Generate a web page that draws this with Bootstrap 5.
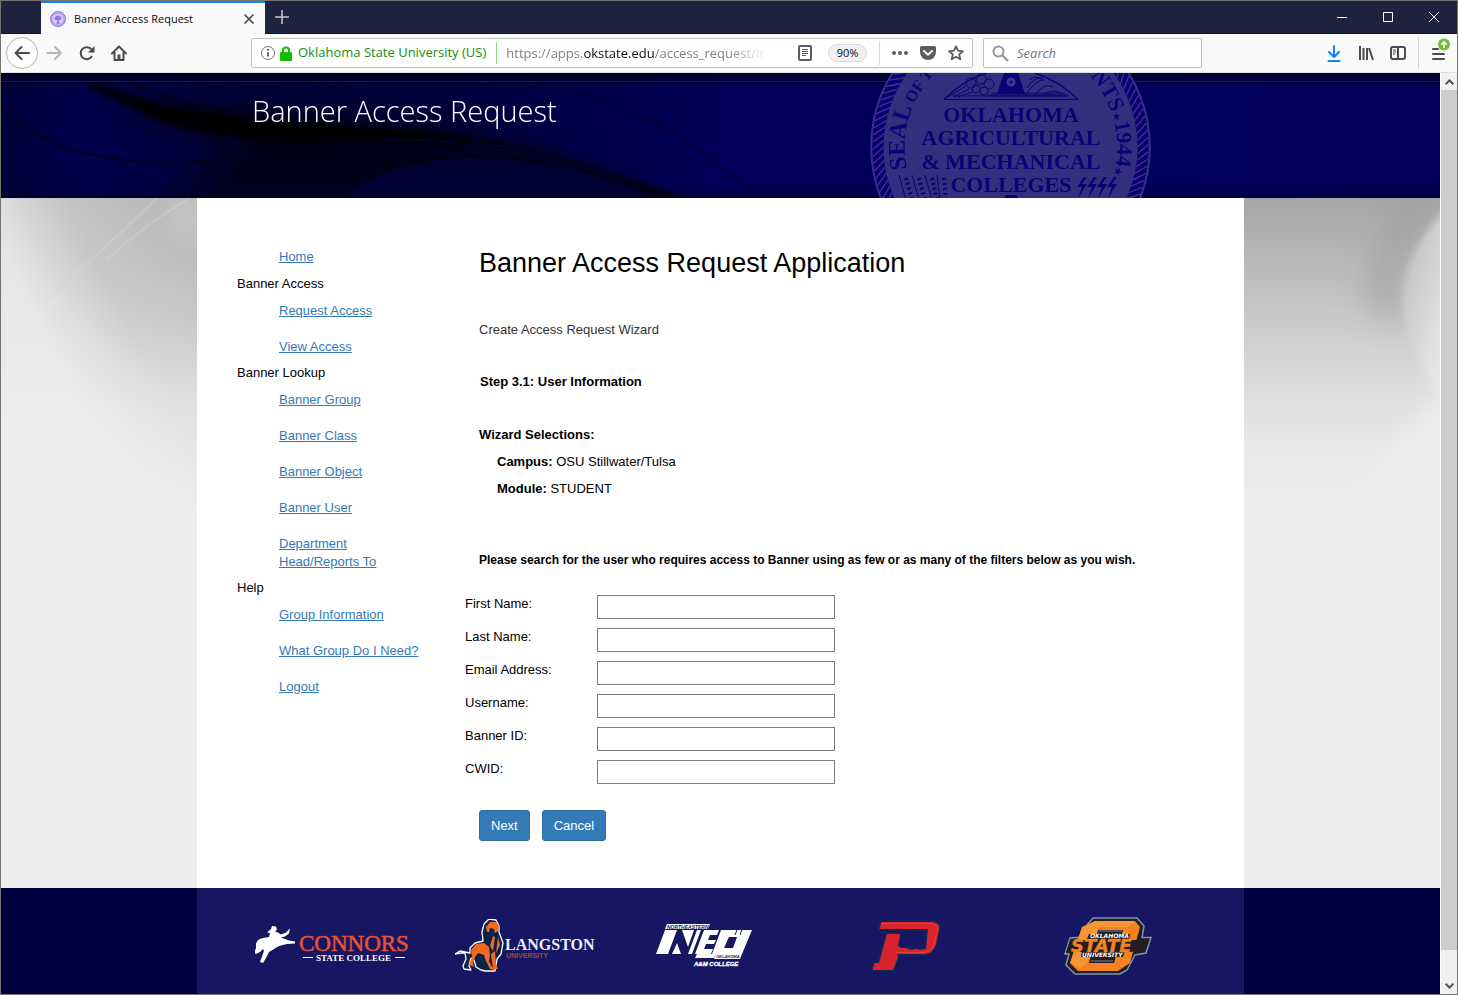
<!DOCTYPE html>
<html lang="en">
<head>
<meta charset="utf-8">
<meta name="viewport" content="width=device-width, initial-scale=1">
<title>Banner Access Request</title>
<link rel="stylesheet" href="https://cdn.jsdelivr.net/npm/bootstrap@5.3.0/dist/css/bootstrap.min.css">
<style>
  :root { --ui: "Open Sans", "Noto Sans", sans-serif; }
  body { font: 13px/18px "Liberation Sans", Arial, sans-serif; color: #000; background: #eee; border: 1px solid #77746f; }
  svg { display: block; }

  /* browser window */
  .tabstrip { background: #202340; height: 33px; border-bottom: 1px solid #1a0c2e; }
  .tab-active { margin-left: 40px; width: 224px; background: #f9f9fa; border-top: 2px solid #0a84ff; color: #0c0c0d; font: 11px/16px var(--ui); margin-bottom: -1px; padding: 0 10px 0 9px; }
  .plain { background: none; border: 0; padding: 0; color: inherit; flex: none; }
  .window-buttons { gap: 36px; margin-right: 18px; }
  .toolbar { background: #f9f9fa; height: 39px; border-bottom: 1px solid #e0e0e1; font: 13px/20px var(--ui); padding: 0 6px 0 5px; color: #4a4a4f; }
  .back { width: 32px; height: 32px; border: 1px solid #b5b5b7; border-radius: 50%; background: #fdfdfd; }
  .field { height: 30px; border: 1px solid #bfbfc0; border-radius: 2px; background: #fff; }
  .address { margin-left: 124px; }
  .identity { color: #12900d; border-right: 1px solid #8ad987; height: 22px; padding-right: 10px; margin-left: 6px; }
  .url { color: #808085; width: 260px; margin-left: 9px; -webkit-mask-image: linear-gradient(90deg, #000 85%, transparent); mask-image: linear-gradient(90deg, #000 85%, transparent); }
  .url b { color: #0c0c0d; font-weight: 400; }
  .zoom { font-size: 11px; line-height: 16px; color: #0c0c0d; background: #f0f0f1; border: 1px solid #dcdcde; border-radius: 9px; width: 39px; height: 18px; }
  .rule { width: 1px; background: #d7d7db; height: 24px; }
  .search { width: 219px; margin: 0 124px 0 10px; padding: 0 8px; }
  .search input { border: 0; outline: 0; min-width: 0; font-style: italic; }
  .search input::placeholder { color: #75757a; opacity: 1; }
  .tools { margin-right: 12px; }
  .scroll-track { width: 17px; background: #f0f0f0; border-left: 1px solid #fff; }
  .scroll-track button { height: 17px; }
  .scroll-thumb { background: #cdcdcd; margin-bottom: 27px; }

  /* page */
  .page-col { max-width: 1047px; width: 100%; margin: 0 auto; }
  .masthead { height: 125px; background: #000050; }
  .masthead .backdrop { position: absolute; inset: 0; width: 100%; height: 100%; }
  .masthead h1 { font: 300 29px/40px var(--ui); color: #fff; margin: 0; padding: 18px 0 0 55px; position: relative; }
  .seal { position: absolute; top: 0; right: 92px; }
  .middle .backdrop { position: absolute; top: 0; height: 330px; width: 196px; }
  .sheet { background: #fff; padding: 49px 40px 46px; }
  .side { width: 228px; flex: none; padding-top: 1px; }
  .side h2 { font: inherit; margin: 0 0 9px; }
  .side ul { padding: 0 40px 0 42px; margin-bottom: 8px; }
  .side ul:first-child { margin-bottom: 9px; }
  .side li + li { margin-top: 18px; }
  .side a { color: #337ab7; }
  .inset { padding-left: 14px; }
  .inset h2 { font-size: 27px; line-height: 32px; margin: 0 0 42px; }
  .lede { color: #333; margin-bottom: 34px; }
  .step { font-weight: 700; padding-left: 1px; margin-bottom: 35px; }
  .picks { padding-left: 18px; margin-bottom: 53px; }
  .picks div { margin-top: 9px; }
  .ask { font-size: 12px; font-weight: 700; margin-bottom: 26px; }
  .line { height: 24px; margin-bottom: 9px; }
  .line label { width: 132px; }
  .line input { width: 238px; height: 24px; border: 1px solid #7a7a7a; padding: 1px 4px; }
  .actions { gap: 12px; padding-top: 17px; }
  .act { --bs-btn-bg: #337ab7; --bs-btn-border-color: #2e6da4; --bs-btn-color: #fff; --bs-btn-hover-bg: #286090; --bs-btn-hover-color: #fff; --bs-btn-font-size: 13px; --bs-btn-line-height: 18px; --bs-btn-padding-x: 11px; --bs-btn-padding-y: 5px; --bs-btn-border-radius: 3px; height: 31px; }
  footer { background: #000040; }
  .schools { background: #161663; height: 106px; display: grid; grid-template-columns: 200fr 201fr 215fr 192fr 181fr; padding-left: 58px; align-items: center; padding-top: 10px; }
</style>
</head>
<body class="d-flex flex-column min-vh-100">

<div class="tabstrip d-flex align-items-stretch">
  <div class="tab-active d-flex align-items-center">
    <svg width="16" height="16" viewBox="0 0 16 16"><circle cx="8" cy="8" r="7.500" fill="#b9a5ee" stroke="#8d74da"/><circle cx="8" cy="8" r="5.300" fill="#d9ccfa"/><path d="M4.500 8a3.500 3.500 0 1 1 7 0q-1 1.500-3 1l1 4h-3l1-4q-2 .5-3-1z" fill="#9179dc"/></svg>
    <span class="ms-1 ps-1 flex-grow-1 text-nowrap">Banner Access Request</span>
    <button class="plain" aria-label="Close tab"><svg width="12" height="12" viewBox="0 0 12 12" stroke="#4a4a4f" stroke-width="1.700"><path d="M1.500 1.500l9 9m0-9l-9 9"/></svg></button>
  </div>
  <button class="plain ms-2" aria-label="New tab"><svg width="18" height="18" viewBox="0 0 18 18" stroke="#c3c3cb" stroke-width="1.600"><path d="M9 2v14M2 9h14"/></svg></button>
  <div class="window-buttons d-flex align-items-center ms-auto">
    <button class="plain" aria-label="Minimize"><svg width="10" height="10" viewBox="0 0 10 10"><path d="M0 5.500h10" stroke="#fff"/></svg></button>
    <button class="plain" aria-label="Maximize"><svg width="10" height="10" viewBox="0 0 10 10"><path d="M.5.5h9v9h-9z" fill="none" stroke="#fff"/></svg></button>
    <button class="plain" aria-label="Close"><svg width="10" height="10" viewBox="0 0 10 10"><path d="M0 0l10 10M10 0L0 10" stroke="#fff"/></svg></button>
  </div>
</div>

<div class="toolbar d-flex align-items-center">
  <button class="plain back d-flex align-items-center justify-content-center" aria-label="Back"><svg width="16" height="16" viewBox="0 0 16 16" fill="none" stroke="#4a4a4f" stroke-width="2" stroke-linecap="round" stroke-linejoin="round"><path d="M15 8H1.500M7.500 2l-6 6 6 6"/></svg></button>
  <button class="plain ms-2" aria-label="Forward"><svg width="17" height="16" viewBox="0 0 17 16" fill="none" stroke="#b5b5b7" stroke-width="2" stroke-linecap="round" stroke-linejoin="round"><path d="M1.500 8H15M9 2l6 6-6 6"/></svg></button>
  <button class="plain ms-3" aria-label="Reload"><svg width="16" height="16" viewBox="0 0 16 16"><path d="M13 11a6 6 0 1 1-.5-6.500" fill="none" stroke="#4a4a4f" stroke-width="2"/><path d="M15.500 1v6.500H9z" fill="#4a4a4f"/></svg></button>
  <button class="plain ms-3" aria-label="Home"><svg width="16" height="16" viewBox="0 0 16 16"><path d="M1 8.500L8 1.500l7 7M3.500 7v8h9V7" fill="none" stroke="#4a4a4f" stroke-width="2" stroke-linejoin="round" stroke-linecap="round"/><path d="M6.500 15V9.500h3V15z" fill="#4a4a4f"/></svg></button>

  <div class="field address d-flex align-items-center flex-grow-1 px-2">
    <svg class="flex-shrink-0" width="16" height="16" viewBox="0 0 16 16"><circle cx="8" cy="8" r="6.500" fill="none" stroke="#737377"/><path d="M8 7v4.500" stroke="#4a4a4f" stroke-width="1.600"/><circle cx="8" cy="4.700" r="1" fill="#4a4a4f"/></svg>
    <svg class="flex-shrink-0 ms-1" width="12" height="15" viewBox="0 0 12 15"><path d="M3 7V4.500a3 3 0 0 1 6 0V7" fill="none" stroke="#12bc00" stroke-width="2"/><rect y="6" width="12" height="9" rx="1" fill="#12bc00"/></svg>
    <span class="identity text-nowrap">Oklahoma State University (US)</span>
    <div class="url text-nowrap overflow-hidden" role="textbox" aria-label="Address" contenteditable="true">https://apps.<b>okstate.edu</b>/access_request/in</div>
    <span class="d-flex align-items-center ms-auto">
      <button class="plain me-3" aria-label="Reader view"><svg width="14" height="16" viewBox="0 0 14 16" fill="none" stroke="#5c5c61"><rect x="1" y="1" width="12" height="14" rx="1" stroke-width="2"/><path d="M4 4.500h6M4 6.500h6M4 8.500h6M4 10.500h4"/></svg></button>
      <button class="plain zoom me-2" aria-label="Zoom level">90%</button>
      <span class="rule ms-1 me-2"></span>
      <button class="plain ms-1" aria-label="Page actions"><svg width="16" height="16" viewBox="0 0 16 16" fill="#5c5c61"><circle cx="2" cy="8" r="2"/><circle cx="8" cy="8" r="2"/><circle cx="14" cy="8" r="2"/></svg></button>
      <button class="plain mx-2 ps-1" aria-label="Save to Pocket"><svg width="16" height="14" viewBox="0 0 16 14"><path d="M1.500 0h13A1.500 1.500 0 0 1 16 1.500V6A8 8 0 0 1 0 6V1.500A1.500 1.500 0 0 1 1.500 0z" fill="#5c5c61"/><path d="M4 5l4 3.800L12 5" fill="none" stroke="#fff" stroke-width="2" stroke-linecap="round" stroke-linejoin="round"/></svg></button>
      <button class="plain ms-1" aria-label="Bookmark"><svg width="16" height="16" viewBox="0 0 16 16"><path d="M8 1.300l2 4.400 4.900.5-3.700 3.200 1.100 4.900L8 11.800l-4.300 2.500 1.100-4.900L1.100 6.200 6 5.700z" fill="none" stroke="#5c5c61" stroke-width="1.800" stroke-linejoin="round"/></svg></button>
    </span>
  </div>
  <div class="field search d-flex align-items-center flex-shrink-0">
    <svg class="flex-shrink-0" width="17" height="17" viewBox="0 0 17 17" fill="none" stroke="#98989c" stroke-width="2"><circle cx="6.500" cy="6.500" r="5"/><path d="M10 10l6 6" stroke-width="2.400"/></svg>
    <input class="ms-1 ps-1" type="search" placeholder="Search" aria-label="Search">
  </div>
  <div class="tools d-flex align-items-center gap-3">
    <button class="plain" aria-label="Downloads"><svg width="16" height="18" viewBox="0 0 16 18" fill="none" stroke="#0a84ff" stroke-width="2" stroke-linecap="round" stroke-linejoin="round"><path d="M8 2v10M3 8l5 5 5-5M2.500 17h11"/></svg></button>
    <button class="plain" aria-label="Library"><svg width="16" height="16" viewBox="0 0 16 16" fill="none" stroke="#4a4a4f" stroke-width="2"><path d="M2 1v14M5.500 3v12M9 3v12M11 3l4 12"/></svg></button>
    <button class="plain" aria-label="Sidebars"><svg width="16" height="16" viewBox="0 0 16 16" fill="none" stroke="#4a4a4f"><rect x="1" y="2" width="14" height="12" rx="2" stroke-width="2"/><path d="M8 2v12" stroke-width="2"/><path d="M3 5h3M3 7h3M3 9h2"/></svg></button>
  </div>
  <span class="rule me-2 py-3"></span>
  <button class="plain ms-1" aria-label="Menu"><svg width="20" height="30" viewBox="0 0 20 30"><path d="M2 12h5M2 17h11M2 22h11" transform="translate(0 -1)" stroke="#4a4a4f" stroke-width="2" stroke-linecap="round"/><circle cx="13" cy="6.500" r="6" fill="#70bf3c"/><path d="M13 10V4M10.300 6.500L13 3.800l2.700 2.700" fill="none" stroke="#fff" stroke-width="1.600"/></svg></button>
</div>

<div class="d-flex flex-grow-1">
<div class="d-flex flex-column flex-grow-1">

  <header class="masthead position-relative overflow-hidden">
    <svg class="backdrop" viewBox="0 0 1439 125" preserveAspectRatio="none" aria-hidden="true">
      <defs>
        <linearGradient id="sky"><stop offset="0" stop-color="#00003a"/><stop offset=".06" stop-color="#00004c"/><stop offset=".16" stop-color="#000038"/><stop offset=".34" stop-color="#000040"/><stop offset=".5" stop-color="#000058"/><stop offset=".8" stop-color="#00005e"/><stop offset="1" stop-color="#000058"/></linearGradient>
        <linearGradient id="shade" x2="0" y2="1"><stop offset="0" stop-color="#000014" stop-opacity=".7"/><stop offset=".12" stop-color="#000014" stop-opacity="0"/><stop offset=".9" stop-color="#000014" stop-opacity="0"/><stop offset="1" stop-color="#000014" stop-opacity=".3"/></linearGradient>
        <linearGradient id="well" x2="0" y2="1"><stop offset="0" stop-color="#00002c"/><stop offset="1" stop-color="#000038"/></linearGradient>
        <filter id="f2" x="-20%" y="-20%" width="140%" height="140%"><feGaussianBlur stdDeviation="3"/></filter>
        <filter id="f8" x="-60%" y="-60%" width="220%" height="220%"><feGaussianBlur stdDeviation="14"/></filter>
        <filter id="f1"><feGaussianBlur stdDeviation=".7"/></filter>
      </defs>
      <path fill="url(#sky)" d="M0 0h1439v125H0z"/>
      <path d="M90 9Q150 60 250 60L180 125H500L640 120Q480 50 300 45T100 9z" fill="#000010" opacity=".75" filter="url(#f8)"/>
      <path d="M95 9Q140 30 214 39Q270 46 340 51Q430 57 480 67Q570 85 690 127H655Q560 82 450 72Q380 66 300 69Q200 66 150 45Q120 28 80 9z" fill="#000004" opacity=".95" filter="url(#f2)"/>
      <path d="M337 125C400 75 510 63 655 125z" fill="url(#well)" stroke="#000010" stroke-width="2" filter="url(#f1)"/>
      <g fill="none" filter="url(#f1)">
        <path d="M380 66C480 64 560 88 645 125" stroke="#00003e" stroke-width="1.500"/>
        <path d="M470 69C540 78 600 100 660 125" stroke="#000050"/>
        <path d="M130 9Q180 35 280 44" stroke="#000018" stroke-width="2"/>
        <path d="M345 10Q220 45 160 125M0 32Q60 100 210 87T380 72" stroke="#000018" stroke-width="1.500"/>
        <path d="M530 9Q670 35 755 125" stroke="#000038" stroke-width="2"/>
        <path d="M1180 125Q1340 90 1439 10M1240 9Q1160 70 1030 125" stroke="#00006a" stroke-width="3" opacity=".4"/>
      </g>
      <path fill="url(#shade)" d="M0 0h1439v125H0z"/>
      <path d="M0 8.500h1439" stroke="#1c0c8c"/>
    </svg>
    <div class="page-col position-relative">
      <svg class="seal" width="284" height="125" viewBox="867 73 284 125" role="img" aria-label="Seal of the Oklahoma Agricultural and Mechanical Colleges">
        <defs>
          <path id="arcL" d="M906 169A105 105 0 0 1 1010 42"/>
          <path id="arcR" d="M1089 76A106 106 0 0 1 1010 253"/>
        </defs>
        <circle cx="1009.500" cy="147" r="140" fill="#0c0070"/>
        <circle cx="1009.500" cy="147" r="139.300" fill="none" stroke="#34318c" stroke-width="2"/>
        <g id="rope" stroke="#3a388c" stroke-width="1.300"></g>
        <circle cx="1009.500" cy="147" r="127" fill="#32307e"/>
        <g fill="#0c0074" font-family="'Liberation Serif', serif" font-weight="700">
          <text font-size="24"><textPath href="#arcL">SEAL<tspan font-size="16"> OF THE</tspan></textPath></text>
          <text font-size="22"><textPath href="#arcR">NTS<tspan font-size="11" font-family="DejaVu Sans">★</tspan>1944<tspan font-size="11" font-family="DejaVu Sans">★</tspan></textPath></text>
          <g font-size="22" text-anchor="middle"><text x="1010" y="122">OKLAHOMA</text><text x="1010" y="145">AGRICULTURAL</text><text x="1010" y="169">&amp; MECHANICAL</text><text x="1010" y="192">COLLEGES</text></g>
        </g>
        <g fill="none" stroke="#0c0074">
          <path d="M943 99.500Q962 80 986 73M1034 73Q1060 82 1077 99.500" stroke-width="1.400"/><path d="M943 99.500H1077M952 96h116"/>
          <path d="M987 95.500h80M990 93.500h74" stroke-width="2" opacity=".6"/>
          <path d="M947 97l18-11M952 97l16-8M957 97l14-5M1024 96q12-18 20-16M1034 96q8-14 18-9M1042 96q8-8 18-3M1026 88q8-12 16-10M1028 80q6-6 14 0"/>
          <circle cx="970" cy="83" r="5"/><circle cx="980" cy="79" r="5"/><circle cx="975" cy="89" r="4"/><circle cx="988" cy="84" r="5"/><circle cx="983" cy="91" r="4"/>
        </g>
        <path d="M1003 73h14l7 21h-28z" fill="#0c0074"/><path d="M1000 94L1006 74M1020 94L1014 74" stroke="#0c0074" stroke-width="6" stroke-dasharray="1.500 1.500"/>
        <circle cx="1010" cy="82" r="4.500" fill="#3a388c"/><circle cx="1010" cy="82" r="1.600" fill="#0c0074"/>
        <path d="M1005 195h10l2 3h-14z" fill="#0c0074"/>
        <g fill="#0c0074"><path id="bolt" d="M1083 177l-7 10h5l-4 11 9-14h-5l5-7z"/><use href="#bolt" x="10"/><use href="#bolt" x="20"/><use href="#bolt" x="30"/></g>
        <g fill="none" stroke="#0c0074"><path id="wheat" d="M898 175l7 25"/><use href="#wheat" x="13"/><use href="#wheat" x="26"/><path d="M936 175l3 25"/><path d="M905 178l6 22M918 178l6 22M931 178l5 22M943 178l2 22" stroke-width="4" stroke-dasharray="2 3"/></g>
      </svg>
      <h1>Banner Access Request</h1>
    </div>
  </header>

  <div class="middle position-relative d-flex flex-grow-1">
    <svg class="backdrop start-0" viewBox="0 0 196 330" preserveAspectRatio="none" aria-hidden="true">
      <defs>
        <linearGradient id="fadeL" x2="0" y2="1"><stop offset="0" stop-color="#b8b8b8"/><stop offset=".2" stop-color="#bcbcbc"/><stop offset=".4" stop-color="#c8c8c8"/><stop offset=".65" stop-color="#e0e0e0"/><stop offset="1" stop-color="#eee"/></linearGradient>
        <linearGradient id="edgeL" gradientUnits="userSpaceOnUse" x1="0" y1="50" x2="160" y2="-30"><stop offset="0" stop-color="#eee" stop-opacity=".85"/><stop offset=".45" stop-color="#eee" stop-opacity=".2"/><stop offset="1" stop-color="#eee" stop-opacity="0"/></linearGradient>
      </defs>
      <path fill="url(#fadeL)" d="M0 0h196v330H0z"/><path d="M170 0H196V60z" fill="#fff" opacity=".35" filter="url(#f8)"/>
      <path fill="url(#edgeL)" d="M0 0h196v330H0z"/>
      <path d="M156 0Q110 45 45 102M188 0Q140 30 105 62" stroke="#d6d6d6" stroke-width="2" opacity=".4" fill="none" filter="url(#f1)"/>
    </svg>
    <svg class="backdrop end-0" viewBox="0 0 196 330" preserveAspectRatio="none" aria-hidden="true">
      <defs>
        <linearGradient id="fadeR" x2="0" y2="1"><stop offset="0" stop-color="#a6a6a6"/><stop offset=".15" stop-color="#b4b4b4"/><stop offset=".35" stop-color="#c8c8c8"/><stop offset=".55" stop-color="#dadada"/><stop offset=".75" stop-color="#e8e8e8"/><stop offset="1" stop-color="#eee"/></linearGradient>
        <linearGradient id="orb" x2="1" y2="1"><stop offset="0" stop-color="#bcbcbc"/><stop offset=".7" stop-color="#e4e4e4"/><stop offset="1" stop-color="#eee"/></linearGradient>
      </defs>
      <path fill="url(#fadeR)" d="M0 0h196v330H0z"/>
      <path d="M196 0L150 10Q120 60 120 110L162 130L158 95Q160 50 196 5z" fill="#999" opacity=".5" filter="url(#f8)"/>
      <path d="M204 8C145 70 142 130 204 205z" fill="url(#orb)" opacity=".85" filter="url(#f2)"/>
      <path d="M100 330L210 170V330z" fill="#eee" filter="url(#f8)"/>
    </svg>
    <div class="page-col sheet position-relative d-flex align-items-start">
      <nav class="side" aria-label="Application">
        <ul class="list-unstyled"><li><a href="#">Home</a></li></ul>
        <h2>Banner Access</h2>
        <ul class="list-unstyled"><li><a href="#">Request Access</a></li><li><a href="#">View Access</a></li></ul>
        <h2>Banner Lookup</h2>
        <ul class="list-unstyled"><li><a href="#">Banner Group</a></li><li><a href="#">Banner Class</a></li><li><a href="#">Banner Object</a></li><li><a href="#">Banner User</a></li><li><a href="#">Department Head/Reports To</a></li></ul>
        <h2>Help</h2>
        <ul class="list-unstyled"><li><a href="#">Group Information</a></li><li><a href="#">What Group Do I Need?</a></li><li><a href="#">Logout</a></li></ul>
      </nav>
      <main class="flex-grow-1">
        <div class="inset">
          <h2>Banner Access Request Application</h2>
          <p class="lede">Create Access Request Wizard</p>
          <p class="step">Step 3.1: User Information</p>
          <div class="fw-bold">Wizard Selections:</div>
          <div class="picks"><div><b>Campus:</b> OSU Stillwater/Tulsa</div><div><b>Module:</b> STUDENT</div></div>
          <p class="ask">Please search for the user who requires access to Banner using as few or as many of the filters below as you wish.</p>
        </div>
        <form>
          <div class="line d-flex"><label for="first">First Name:</label><input id="first" type="text"></div>
          <div class="line d-flex"><label for="last">Last Name:</label><input id="last" type="text"></div>
          <div class="line d-flex"><label for="email">Email Address:</label><input id="email" type="text"></div>
          <div class="line d-flex"><label for="user">Username:</label><input id="user" type="text"></div>
          <div class="line d-flex"><label for="bid">Banner ID:</label><input id="bid" type="text"></div>
          <div class="line d-flex"><label for="cwid">CWID:</label><input id="cwid" type="text"></div>
          <div class="inset actions d-flex"><button type="button" class="btn act">Next</button><button type="button" class="btn act">Cancel</button></div>
        </form>
      </main>
    </div>
  </div>

  <footer>
    <div class="page-col schools">
      <a href="#" aria-label="Connors State College"><svg width="156" height="40" viewBox="0 0 156 40">
        <path fill="#fff" d="M1 18q1-5 7-6l6-1 1-4-3-.500 4-3.500 1-3 4 .5 1 3-2 2 3 1 3 2 5-2 4-4-1 5-4 3-4 1 8 3 6 1v2l-8 .5q-9 1.500-13 5l-5 3-3 6-3 5-3-1 4-11-1-2-3 3-4 2-2-1 2-5z"/>
        <text x="44" y="25" font-family="'Liberation Serif',serif" font-size="23" fill="#ea5230" stroke="#ea5230" stroke-width=".5">CONNORS</text>
        <text x="61" y="35" font-family="'Liberation Serif',serif" font-weight="700" font-size="9" fill="#fff">STATE COLLEGE</text>
        <path d="M48 31.500h10M140 31.500h10" stroke="#fff"/></svg></a>
      <a href="#" aria-label="Langston University"><svg width="144" height="54" viewBox="0 0 144 54">
        <path d="M0 35l5-3 10 2 0-5 5-5 8-2-1-9 2-8 5-5 7 1 3 6v6l4 11-2 11-4 5-2 12h-10l-4-1-5-3-2-7-3-2-2 8 2 4-7-1-1-3 3-7-1-6-4 0z" fill="#0b2347" stroke="#fff" stroke-width="1.300" stroke-linejoin="round"/>
        <path d="M14 46l3-8-1-7 5-6 8-1 5 4 1 8-1 6 3 6 4 0-1 3-5-1-4-8-2-6-6-2-3 4-2 7 1 3zM31 8l4-5 6 0 3 4-1 5-3 2-1-4-4-1-1 4-2 0zM38 17l2 1-2 14-3-5zM43 18l2 8-4 8zM36 35l4-3 1 13 2 5h-5z" fill="#f26a1e"/>
        <text x="50" y="31" font-family="'Liberation Serif',serif" font-weight="700" font-size="16" fill="#eceef4">LANGSTON</text>
        <text x="51" y="39" font-family="'Liberation Sans',sans-serif" font-weight="700" font-size="7" fill="#a5473c">UNIVERSITY</text></svg></a>
      <a href="#" aria-label="Northeastern Oklahoma A&amp;M College"><svg width="98" height="46" viewBox="0 0 98 46">
        <path fill="#fff" d="M11 1h43l-2 5H9zM9 7h12l-9 24H0zM16 31l5-11 4 11zM26 7h12l-6 17zM41 7h4l-9 24h-4z"/>
        <path fill="#fff" fill-rule="evenodd" d="M48 7h15l-2 5H54l-2 5h8l-2 4h-8l-2 5h9l-2 5H39zM65 7h31L86 31H56zM73 14l-5 11h9l4-11z"/>
        <path d="M86 6l-2 6M81 7l-2 5" stroke="#161663"/>
        <path d="M41 31h19l-2 4H39zM60 31h26l-2 5H58z" fill="#fff"/>
        <g font-family="'Liberation Sans',sans-serif" font-weight="700" font-style="italic"><text x="11" y="5.500" font-size="5" fill="#161663">NORTHEASTERN</text><text x="60" y="35" font-size="4" fill="#161663">OKLAHOMA</text><text x="38" y="43" font-size="6" fill="#fff" stroke="#fff" stroke-width=".3">A&amp;M COLLEGE</text></g></svg></a>
      <a href="#" aria-label="Panhandle State University"><svg width="70" height="52" viewBox="0 0 70 52">
        <path d="M8.500 9L10.500 2H60Q69 2 68 9L65 24Q62 34 53 34H26L27 37 22 50H1.500L3.500 43H8L16 14H29L27 26 30 28 35 28 39 30 46 29 49 30 55 29 57 9z" fill="#d9232e" stroke="#0c2b55" stroke-width="3" paint-order="stroke"/>
        <path d="M10 3.500h49q8 0 7.500 6L63 24q-3 8.500-11 8.500H25" fill="none" stroke="#f03a3c"/></svg></a>
      <a href="#" aria-label="Oklahoma State University"><svg width="90" height="58" viewBox="0 0 90 58">
        <path d="M30 1h44l7 8-2 11.500h9L83 36l-11 2-8 15-7 4H12l-9-9 3-11H2l5-16 13-1 4-12z" fill="#221e20" stroke="#8291a8" stroke-width="1.500"/>
        <path d="M32 4h40l5 6-10 36-12 8H15l-8-8 12-36zM35 13l-4 14-5 19h25l9-33z" fill="#f58220" fill-rule="evenodd"/>
        <path d="M32 4h40l-7 6H36l-12 36-7 5-10-5 12-36z" fill="#fba13f" opacity=".65"/>
        <path d="M7 23h79l-4 11-17 1H3zM26 17h41l-1 7H23zM19 34h43l-2 6H18z" fill="#221e20"/>
        <path d="M36 14h23M28 44h22" stroke="#76809a"/>
        <g font-family="'DejaVu Sans',sans-serif" font-weight="700" font-style="italic"><text x="8" y="35" font-size="18" fill="#f58220" stroke="#f58220" stroke-width=".4">STATE</text><text x="27" y="21" font-size="6" fill="#fff">OKLAHOMA</text><text x="19" y="40" font-size="6" fill="#fff">UNIVERSITY</text></g></svg></a>
    </div>
  </footer>
</div>

<div class="scroll-track d-flex flex-column flex-shrink-0">
  <button class="plain" aria-label="Scroll up"><svg class="m-auto" width="9" height="6" viewBox="0 0 9 6"><path d="M.7 5.200l3.800-3.800 3.800 3.800" fill="none" stroke="#505050" stroke-width="2"/></svg></button>
  <div class="scroll-thumb flex-grow-1"></div>
  <button class="plain" aria-label="Scroll down"><svg class="m-auto" width="9" height="6" viewBox="0 0 9 6"><path d="M.7.8l3.800 3.800L8.300.8" fill="none" stroke="#505050" stroke-width="2"/></svg></button>
</div>
</div>

<script src="https://cdn.jsdelivr.net/npm/bootstrap@5.3.0/dist/js/bootstrap.bundle.min.js"></script>
<script>
  // slanted strands of the rope around the seal
  const rope = document.getElementById('rope');
  let strands = '';
  for (let a = 0; a < 360; a += 3) {
    const p = (r, d) => [1009.5 + r * Math.cos(d * Math.PI / 180), 147 + r * Math.sin(d * Math.PI / 180)];
    const [x1, y1] = p(127, a), [x2, y2] = p(138, a - 4);
    strands += `<line x1="${x1}" y1="${y1}" x2="${x2}" y2="${y2}"/>`;
  }
  rope.innerHTML = strands;
</script>
</body>
</html>
